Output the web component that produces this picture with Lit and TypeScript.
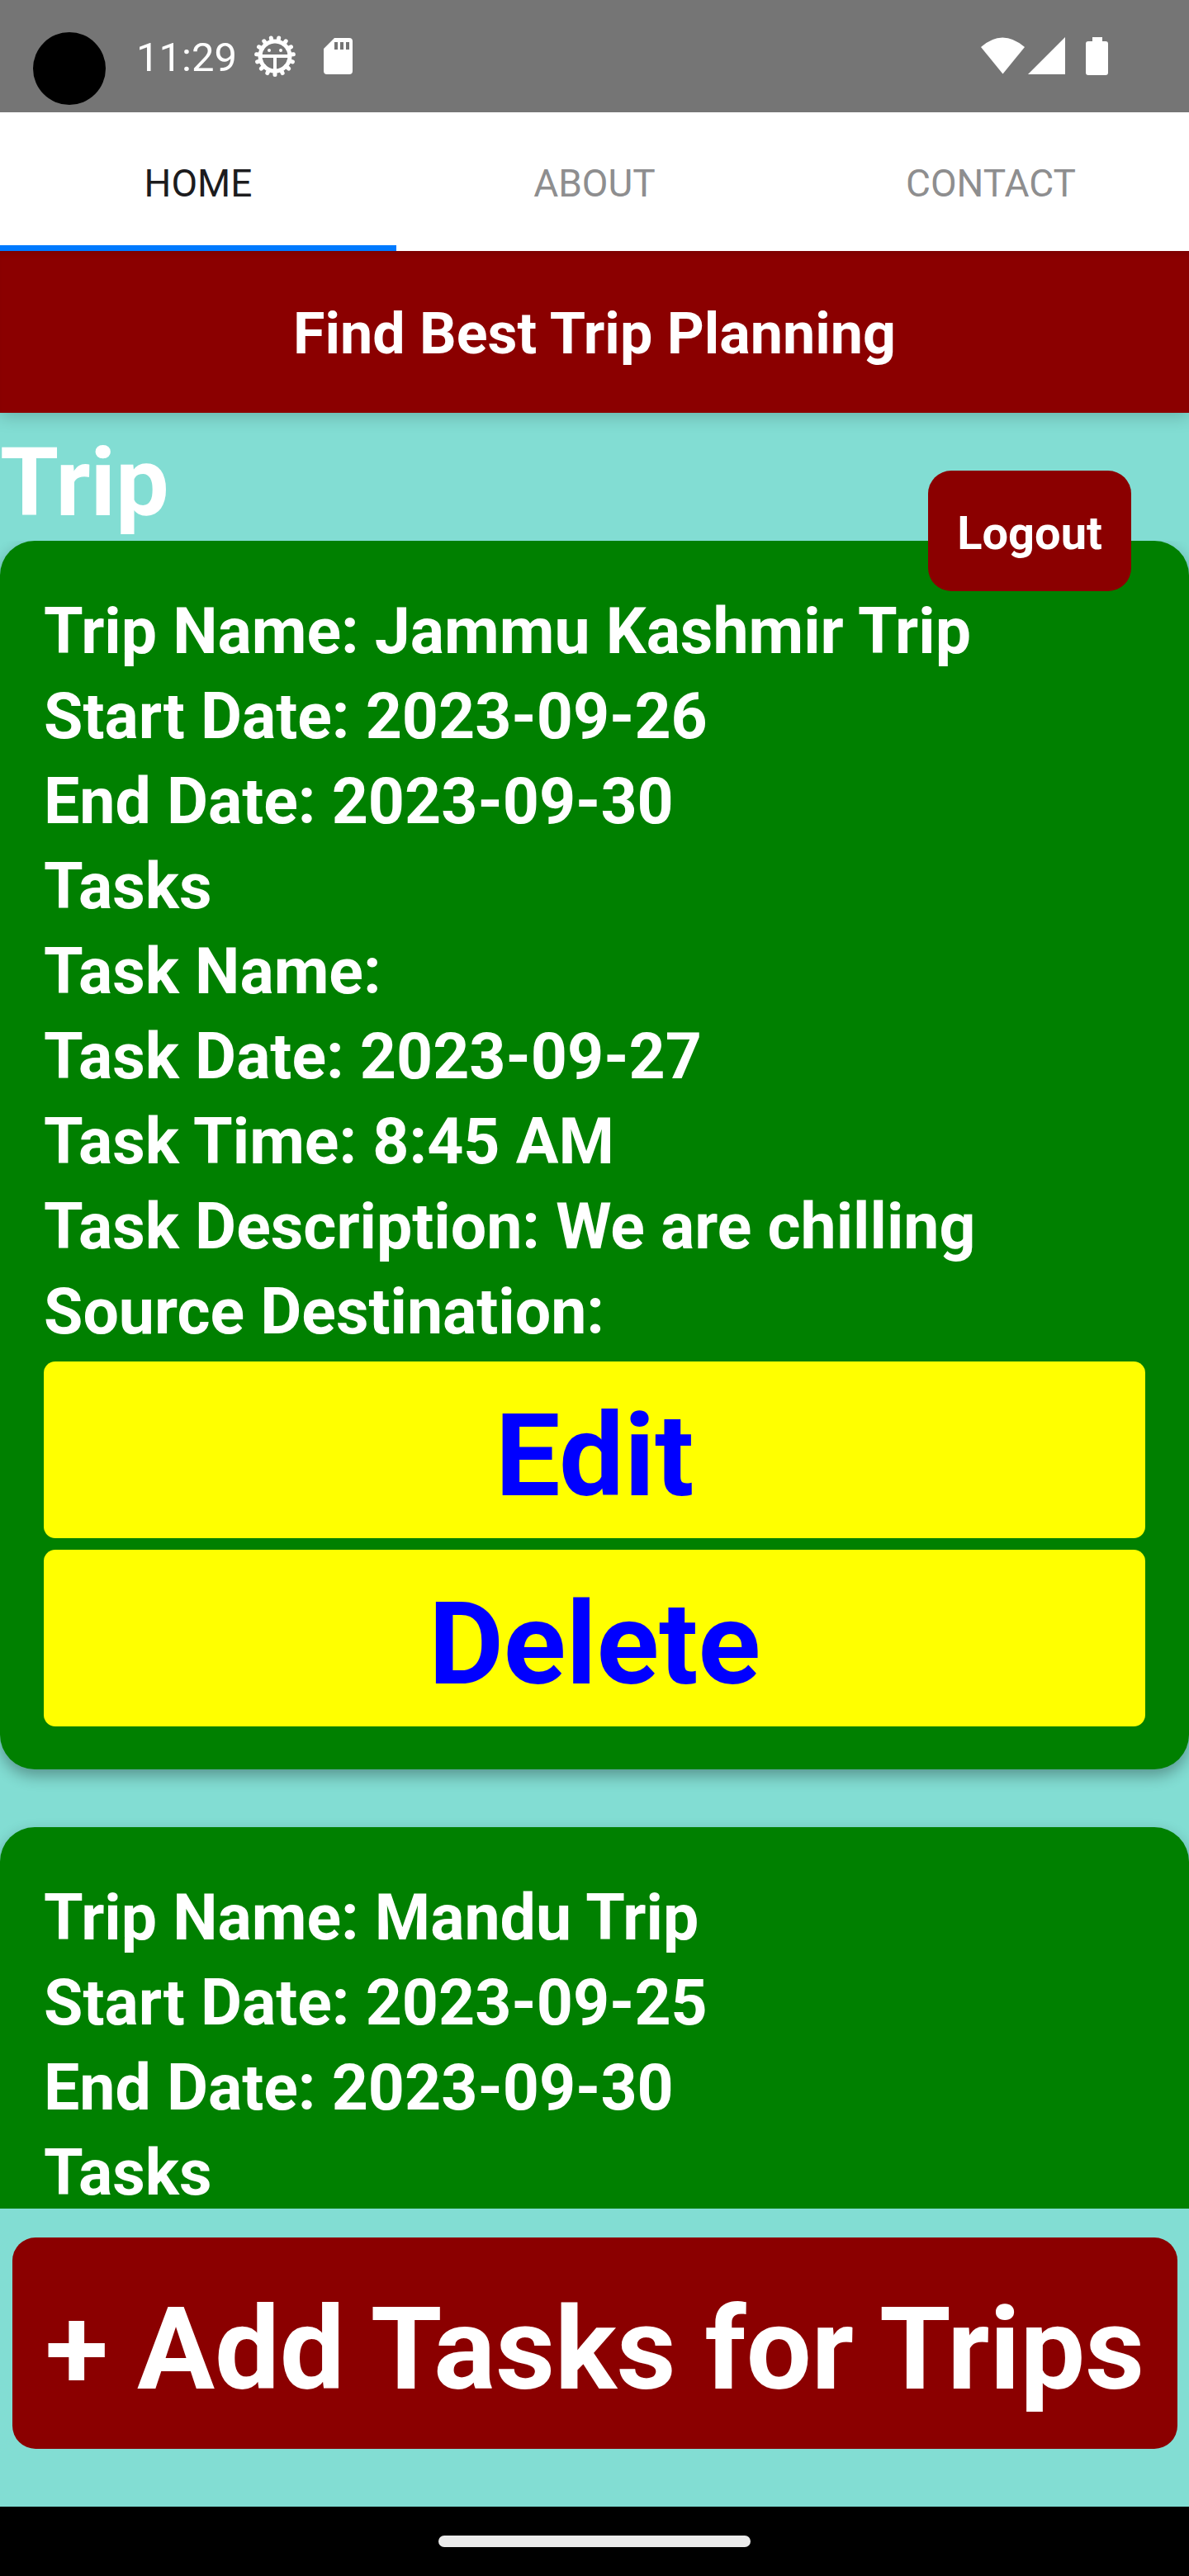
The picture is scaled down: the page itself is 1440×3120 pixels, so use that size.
import { LitElement, html, css, svg, nothing } from "lit";
import { customElement, property, state } from "lit/decorators.js";

interface Trip {
  lines: string[];
  actions: string[];
}

const TRIPS: Trip[] = [
  {
    lines: [
      "Trip Name: Jammu Kashmir Trip",
      "Start Date: 2023-09-26",
      "End Date: 2023-09-30",
      "Tasks",
      "Task Name:",
      "Task Date: 2023-09-27",
      "Task Time: 8:45 AM",
      "Task Description: We are chilling",
      "Source Destination:",
    ],
    actions: ["Edit", "Delete"],
  },
  {
    lines: [
      "Trip Name: Mandu Trip",
      "Start Date: 2023-09-25",
      "End Date: 2023-09-30",
      "Tasks",
    ],
    actions: [],
  },
];

@customElement("status-bar")
export class StatusBar extends LitElement {
  static styles = css`
    :host {
      display: block;
      background: #757575;
      color: #fff;
    }
    .bar {
      display: flex;
      align-items: flex-start;
      height: 136px;
      box-sizing: border-box;
      padding: 39px 94px 0 40px;
    }
    .camera {
      width: 88px;
      height: 88px;
      border-radius: 50%;
      background: #000;
    }
    .clock {
      margin-left: 37px;
      font-size: 49px;
      line-height: 62px;
    }
    .icon {
      display: block;
      height: 60px;
      fill: #fff;
    }
    .debug {
      margin-left: 18px;
      width: 56px;
    }
    .card {
      margin-left: 30px;
      width: 40px;
    }
    .spacer {
      flex: 1;
    }
  `;

  private teeth() {
    return Array.from({ length: 15 }, (_, i) => {
      const a = ((i * 24 + 90) * Math.PI) / 180;
      return svg`<line x1=${28 + 18 * Math.cos(a)} y1=${29 + 18 * Math.sin(a)}
        x2=${28 + 22.5 * Math.cos(a)} y2=${29 + 22.5 * Math.sin(a)}
        stroke="#fff" stroke-width="5" stroke-linecap="round"></line>`;
    });
  }

  render() {
    return html`
      <div class="bar">
        <div class="camera"></div>
        <time class="clock">11:29</time>
        <svg class="icon debug" viewBox="0 0 56 60" aria-hidden="true">
          ${this.teeth()}
          <circle cx="28" cy="29" r="18" fill="none" stroke="#fff" stroke-width="5"></circle>
          <rect x="11" y="27" width="34" height="4"></rect>
          <rect x="26" y="30" width="4" height="17"></rect>
          <circle cx="21" cy="22" r="2"></circle>
          <circle cx="35" cy="22" r="2"></circle>
        </svg>
        <svg class="icon card" viewBox="0 0 40 60" aria-hidden="true">
          <path fill-rule="evenodd" d="M14 7H32a4 4 0 0 1 4 4V47a4 4 0 0 1-4 4H5a4 4 0 0 1-4-4V20ZM14 12v9h4v-9ZM21 12v9h4v-9ZM28 12v9h4v-9Z"></path>
        </svg>
        <div class="spacer"></div>
        <svg class="icon" width="158" viewBox="0 0 158 60" aria-hidden="true">
          <path d="M0 18Q26 -5 53 18L26.500 50.500Z"></path>
          <path d="M102 6V51H57Z"></path>
          <path d="M135 6h12v5h4a3 3 0 0 1 3 3V49a3 3 0 0 1-3 3H130a3 3 0 0 1-3-3V14a3 3 0 0 1 3-3h5Z"></path>
        </svg>
      </div>
    `;
  }
}

@customElement("trip-card")
export class TripCard extends LitElement {
  @property({ attribute: false }) trip: Trip = { lines: [], actions: [] };

  static styles = css`
    :host {
      display: block;
      flex: none;
    }
    .card {
      padding: 59px 53px 52px;
      border-radius: 42px;
      background: #008000;
      color: #fff;
      box-shadow: 0 8px 18px rgba(0, 0, 0, 0.32);
    }
    .line {
      margin: 0;
      font-size: 77px;
      line-height: 103px;
      font-weight: 700;
    }
    .actions {
      display: grid;
      gap: 14px;
      padding-top: 8px;
    }
    .action {
      padding: 14px 0 0;
      border: 0;
      border-radius: 14px;
      background: #ffff00;
      color: #0000ff;
      font: 700 140px / 200px Roboto, sans-serif;
    }
  `;

  render() {
    const { lines, actions } = this.trip;
    return html`
      <article class="card">
        ${lines.map((line) => html`<p class="line">${line}</p>`)}
        ${actions.length
          ? html`<div class="actions">
              ${actions.map((a) => html`<button class="action" type="button">${a}</button>`)}
            </div>`
          : nothing}
      </article>
    `;
  }
}

@customElement("app-root")
export class AppRoot extends LitElement {
  @state() private tab = "Home";

  static styles = css`
    :host {
      display: flex;
      flex-direction: column;
      height: 100vh;
      background: #82ddd3;
      color: #fff;
      font-family: Roboto, sans-serif;
    }
    .tabs {
      display: grid;
      grid-template-columns: repeat(3, 1fr);
      background: #fff;
    }
    .tab {
      height: 168px;
      padding: 10px 0 0;
      border: 0;
      border-bottom: 7px solid transparent;
      background: none;
      color: #8e8e8f;
      font: 400 46px / 60px Roboto, sans-serif;
      text-transform: uppercase;
    }
    .tab.active {
      border-bottom-color: #007aff;
      color: #1c1c1e;
    }
    .header {
      position: relative;
      z-index: 1;
      background: #8b0000;
      text-align: center;
      box-shadow: 0 3px 20px rgba(0, 0, 0, 0.22), inset 0 8px 8px -6px rgba(0, 0, 0, 0.15);
      clip-path: inset(0 0 -40px 0);
    }
    .header-title {
      margin: 0;
      padding: 58px 0 54px;
      font-size: 70px;
      line-height: 84px;
      font-weight: 700;
    }
    .content {
      position: relative;
      flex: 1;
      min-height: 0;
      display: flex;
      flex-direction: column;
    }
    .heading {
      margin: 0;
      padding-top: 14px;
      font-size: 115px;
      line-height: 141px;
      font-weight: 700;
    }
    .list {
      flex: 1;
      min-height: 0;
      display: flex;
      flex-direction: column;
      gap: 70px;
      overflow: hidden;
    }
    .logout {
      position: absolute;
      top: 70px;
      right: 70px;
      padding: 42px 35px 36px;
      border: 0;
      border-radius: 28px;
      background: #8b0000;
      color: #fff;
      font: 700 56px / 68px Roboto, sans-serif;
    }
    .footer {
      padding: 35px 14px 70px 15px;
    }
    .add {
      display: block;
      width: 100%;
      padding: 53px 0 39px;
      border: 0;
      border-radius: 28px;
      background: #8b0000;
      color: #fff;
      font: 700 140px / 164px Roboto, sans-serif;
      white-space: nowrap;
    }
    .system-nav {
      display: flex;
      align-items: center;
      justify-content: center;
      height: 84px;
      background: #000;
    }
    .pill {
      width: 378px;
      height: 14px;
      border-radius: 7px;
      background: #ebebeb;
    }
  `;

  render() {
    return html`
      <status-bar></status-bar>
      <nav class="tabs">
        ${["Home", "About", "Contact"].map(
          (name) => html`<button
            type="button"
            class="tab ${name === this.tab ? "active" : ""}"
            @click=${() => (this.tab = name)}
          >${name}</button>`
        )}
      </nav>
      <header class="header"><h1 class="header-title">Find Best Trip Planning</h1></header>
      <main class="content">
        <h2 class="heading">Trip</h2>
        <section class="list">
          ${TRIPS.map((trip) => html`<trip-card .trip=${trip}></trip-card>`)}
        </section>
        <button class="logout" type="button">Logout</button>
      </main>
      <footer class="footer"><button class="add" type="button">+ Add Tasks for Trips</button></footer>
      <div class="system-nav"><div class="pill"></div></div>
    `;
  }
}
